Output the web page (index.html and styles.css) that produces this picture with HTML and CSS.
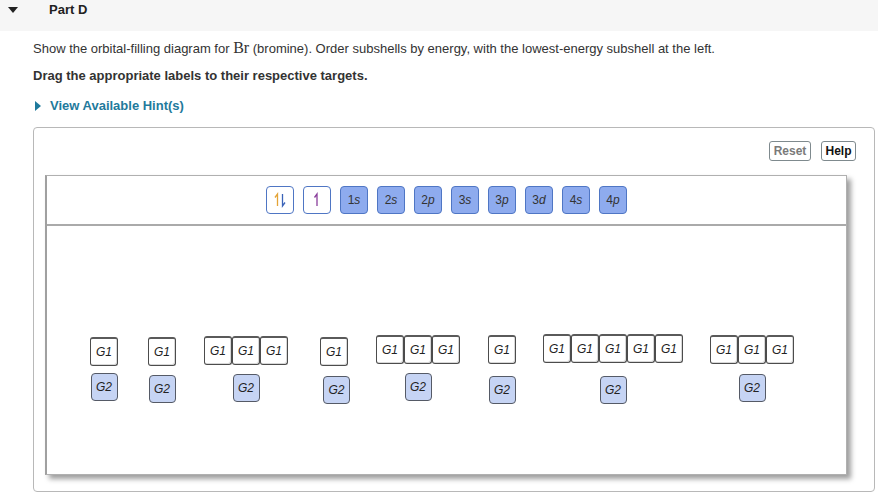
FILE: index.html
```html
<!DOCTYPE html>
<html>
<head>
<meta charset="utf-8">
<link rel="stylesheet" href="styles.css">
</head>
<body>
<div class="part-head">
  <span class="tri-down"></span>
  <span class="part-title">Part D</span>
</div>
<div class="content">
  <p class="q">Show the orbital-filling diagram for <span class="chem">Br</span> (bromine). Order subshells by energy, with the lowest-energy subshell at the left.</p>
  <p class="q bold">Drag the appropriate labels to their respective targets.</p>
  <div class="hint"><span class="tri-right"></span>View Available Hint(s)</div>
  <div class="panel">
    <div class="panel-btns">
      <button class="btn btn-reset">Reset</button>
      <button class="btn btn-help">Help</button>
    </div>
    <div class="canvas">
      <div class="toolbar">
        <div class="lbl lbl-white">
          <svg width="14" height="16" viewBox="0 0 14 16">
            <path d="M4.5 14V2 L2 5.5" fill="none" stroke="#e4a437" stroke-width="1.3"/>
            <path d="M9.5 2V14 L12 10.5" fill="none" stroke="#3a63b8" stroke-width="1.3"/>
          </svg>
        </div>
        <div class="lbl lbl-white">
          <svg width="14" height="16" viewBox="0 0 14 16">
            <path d="M7 14V2 L4.5 5.5" fill="none" stroke="#8b3f9c" stroke-width="1.3"/>
          </svg>
        </div>
        <div class="lbl lbl-blue">1<i>s</i></div>
        <div class="lbl lbl-blue">2<i>s</i></div>
        <div class="lbl lbl-blue">2<i>p</i></div>
        <div class="lbl lbl-blue">3<i>s</i></div>
        <div class="lbl lbl-blue">3<i>p</i></div>
        <div class="lbl lbl-blue">3<i>d</i></div>
        <div class="lbl lbl-blue">4<i>s</i></div>
        <div class="lbl lbl-blue">4<i>p</i></div>
      </div>
      <div class="diagram">
        <div class="grp grp-1">
          <div class="g1row"><div class="g1">G1</div></div>
          <div class="g2 g2-a">G2</div>
        </div>
        <div class="grp grp-2">
          <div class="g1row"><div class="g1">G1</div></div>
          <div class="g2 g2-b">G2</div>
        </div>
        <div class="grp grp-3">
          <div class="g1row"><div class="g1">G1</div><div class="g1">G1</div><div class="g1">G1</div></div>
          <div class="g2 g2-b">G2</div>
        </div>
        <div class="grp grp-4">
          <div class="g1row"><div class="g1">G1</div></div>
          <div class="g2 g2-c g2-shift">G2</div>
        </div>
        <div class="grp grp-5">
          <div class="g1row"><div class="g1">G1</div><div class="g1">G1</div><div class="g1">G1</div></div>
          <div class="g2 g2-b">G2</div>
        </div>
        <div class="grp grp-6">
          <div class="g1row"><div class="g1">G1</div></div>
          <div class="g2 g2-d">G2</div>
        </div>
        <div class="grp grp-7">
          <div class="g1row"><div class="g1">G1</div><div class="g1">G1</div><div class="g1">G1</div><div class="g1">G1</div><div class="g1">G1</div></div>
          <div class="g2 g2-e">G2</div>
        </div>
        <div class="grp grp-8">
          <div class="g1row"><div class="g1">G1</div><div class="g1">G1</div><div class="g1">G1</div></div>
          <div class="g2 g2-c">G2</div>
        </div>
      </div>
    </div>
  </div>
</div>
</body>
</html>
```
FILE: styles.css
```css
* { box-sizing: border-box; }
html, body {
  margin: 0;
  padding: 0;
  background: #fff;
  font-family: "Liberation Sans", Arial, sans-serif;
  color: #333;
}
.part-head {
  height: 31px;
  background: #f6f6f6;
  display: flex;
  align-items: flex-start;
  padding-top: 2px;
}
.tri-down {
  width: 0;
  height: 0;
  margin: 5px 0 0 8px;
  border-left: 5px solid transparent;
  border-right: 5px solid transparent;
  border-top: 6px solid #222;
}
.part-title {
  margin-left: 31px;
  font-size: 13px;
  font-weight: bold;
  color: #222;
  line-height: 15px;
}
.content {
  padding-left: 33px;
  padding-right: 3px;
}
.q {
  margin: 9px 0 0;
  font-size: 13px;
  line-height: 16px;
  color: #333;
}
.q.bold {
  margin-top: 11px;
  font-weight: bold;
}
.chem {
  font-family: "Liberation Serif", "Times New Roman", serif;
  font-size: 16px;
  line-height: 16px;
}
.hint {
  margin-top: 14px;
  font-size: 13px;
  line-height: 16px;
  font-weight: bold;
  color: #1f7a9c;
  display: flex;
  align-items: center;
}
.tri-right {
  width: 0;
  height: 0;
  margin: 0 9px 0 2px;
  border-top: 5px solid transparent;
  border-bottom: 5px solid transparent;
  border-left: 6px solid #1f7a9c;
}
.panel {
  margin-top: 13px;
  height: 365px;
  border: 1px solid #b8b8b8;
  border-radius: 4px;
  padding: 13px 18px 0 11px;
}
.panel-btns {
  display: flex;
  justify-content: flex-end;
  gap: 10px;
  height: 20px;
}
.btn {
  font-family: "Liberation Sans", Arial, sans-serif;
  font-size: 12px;
  font-weight: bold;
  height: 20px;
  padding: 0 3px;
  background: #fff;
  border: 1px solid #7f8a8e;
  border-radius: 3px;
  line-height: 17px;
}
.btn-reset { color: #7a7a7a; width: 42px; }
.btn-help { color: #111; width: 35px; }
.canvas {
  margin-top: 14px;
  width: 802px;
  height: 300px;
  border: 1px solid #b0b0b0;
  border-left: 2px solid #a0a0a0;
  background: #fff;
  box-shadow: 4px 4px 5px rgba(0,0,0,0.38);
}
.toolbar {
  display: flex;
  justify-content: center;
  gap: 9px;
  padding: 10px 0 10px;
  border-bottom: 2px solid #aaa;
}
.lbl {
  width: 28px;
  height: 28px;
  border-radius: 4px;
  display: flex;
  align-items: center;
  justify-content: center;
  font-size: 12px;
  color: #333;
}
.lbl i { font-style: italic; }
.lbl-white {
  background: #fff;
  border: 1px solid #4f76c4;
}
.lbl-blue {
  background: #8eabee;
  border: 1px solid #4f76c4;
}
.diagram {
  position: relative;
  height: 246px;
}
.grp {
  position: absolute;
  display: flex;
  flex-direction: column;
  align-items: center;
}
.grp-1 { left: 43px; top: 111px; }
.grp-2 { left: 101px; top: 111px; }
.grp-3 { left: 157px; top: 110px; }
.grp-4 { left: 271px; top: 111px; }
.grp-5 { left: 329px; top: 109px; }
.grp-6 { left: 441px; top: 109px; }
.grp-7 { left: 496px; top: 108px; }
.grp-8 { left: 663px; top: 109px; }
.g1row {
  display: flex;
}
.g1 {
  width: 28px;
  height: 29px;
  background: #fff;
  border: 1px solid #4c4c4c;
  border-top: 2px solid #5a5a5a;
  border-radius: 3px;
  display: flex;
  align-items: center;
  justify-content: center;
  font-size: 12px;
  font-style: italic;
  color: #222;
  box-shadow: inset -1px -1px 0 #d8d8d8;
}
.g2 {
  width: 27px;
  height: 28px;
  background: #c6d4f4;
  border: 1px solid #555a66;
  border-radius: 4px;
  display: flex;
  align-items: center;
  justify-content: center;
  font-size: 12px;
  font-style: italic;
  color: #222;
}
.g2-a { margin-top: 7px; }
.g2-b { margin-top: 9px; }
.g2-c { margin-top: 10px; }
.g2-d { margin-top: 12px; }
.g2-e { margin-top: 13px; }
.g2-shift { margin-left: 5px; }
```
